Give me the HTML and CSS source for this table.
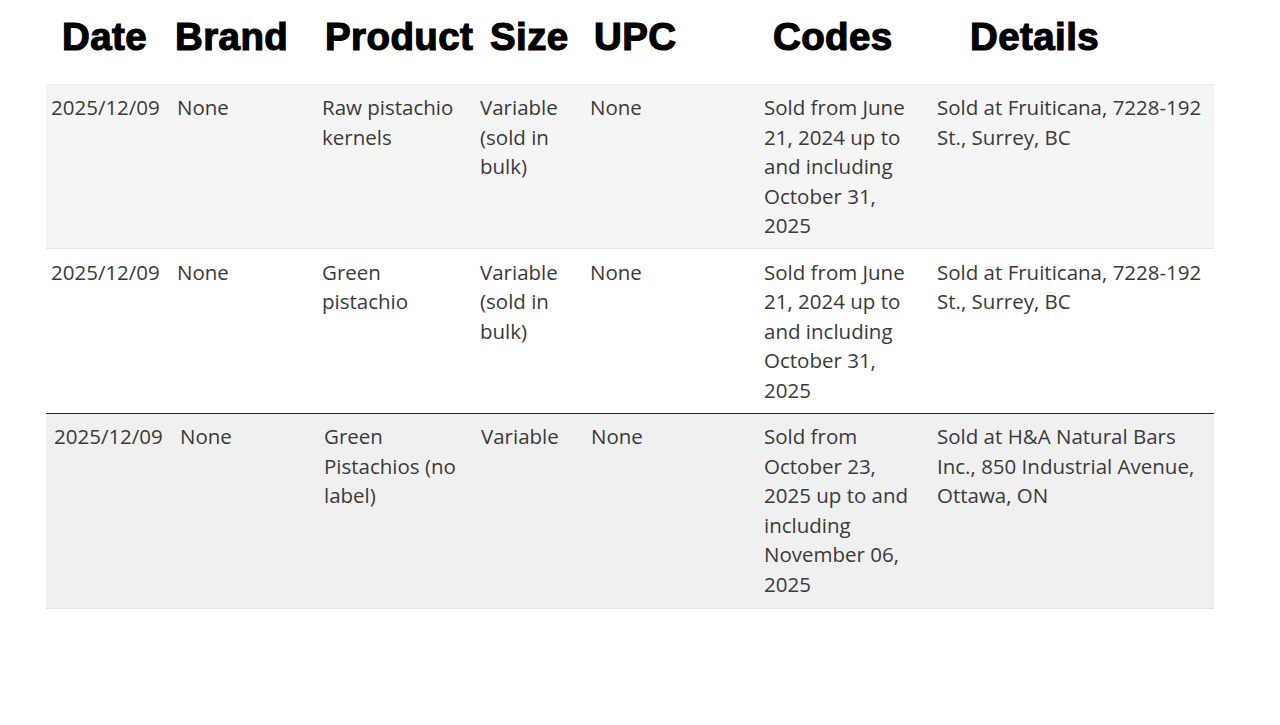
FILE: index.html
```html
<!DOCTYPE html>
<html lang="en">
<head>
<meta charset="utf-8">
<title>Recall table</title>
<link rel="stylesheet" href="styles.css">
</head>
<body>
<div class="head">
  <div class="h h-date">Date</div>
  <div class="h h-brand">Brand</div>
  <div class="h h-product">Product</div>
  <div class="h h-size">Size</div>
  <div class="h h-upc">UPC</div>
  <div class="h h-codes">Codes</div>
  <div class="h h-details">Details</div>
</div>
<table class="tbl">
  <colgroup>
    <col class="c1"><col class="c2"><col class="c3"><col class="c4"><col class="c5"><col class="c6"><col class="c7">
  </colgroup>
  <tbody>
    <tr class="r1">
      <td>2025/12/09</td>
      <td>None</td>
      <td>Raw pistachio<br>kernels</td>
      <td>Variable<br>(sold in<br>bulk)</td>
      <td>None</td>
      <td>Sold from June<br>21, 2024 up to<br>and including<br>October 31,<br>2025</td>
      <td>Sold at Fruiticana, 7228-192<br>St., Surrey, BC</td>
    </tr>
    <tr class="r2">
      <td>2025/12/09</td>
      <td>None</td>
      <td>Green<br>pistachio</td>
      <td>Variable<br>(sold in<br>bulk)</td>
      <td>None</td>
      <td>Sold from June<br>21, 2024 up to<br>and including<br>October 31,<br>2025</td>
      <td>Sold at Fruiticana, 7228-192<br>St., Surrey, BC</td>
    </tr>
    <tr class="r3">
      <td>2025/12/09</td>
      <td>None</td>
      <td>Green<br>Pistachios (no<br>label)</td>
      <td>Variable</td>
      <td>None</td>
      <td>Sold from<br>October 23,<br>2025 up to and<br>including<br>November 06,<br>2025</td>
      <td>Sold at H&amp;A Natural Bars<br>Inc., 850 Industrial Avenue,<br>Ottawa, ON</td>
    </tr>
  </tbody>
</table>
</body>
</html>
```

FILE: styles.css
```css
html, body {
  margin: 0;
  padding: 0;
  background: #ffffff;
}

.head {
  display: grid;
  grid-template-columns: 113px 150px 165px 104px 179px 197px auto;
  padding-left: 62px;
  height: 84px;
  align-items: center;
  box-sizing: border-box;
  padding-bottom: 10px;
}

.h {
  font-family: "Liberation Sans", Arial, sans-serif;
  font-weight: 700;
  font-size: 38.5px;
  line-height: 40px;
  color: #000;
  -webkit-text-stroke: 1.2px #000;
  letter-spacing: 0.4px;
  white-space: nowrap;
}

.tbl {
  margin-left: 46px;
  width: 1168px;
  border-collapse: collapse;
  table-layout: fixed;
  font-family: "Open Sans", "Noto Sans", sans-serif;
  font-size: 20.5px;
  line-height: 29.5px;
  color: #3a3a3a;
}

.c1 { width: 126px; }
.c2 { width: 145px; }
.c3 { width: 158px; }
.c4 { width: 110px; }
.c5 { width: 174px; }
.c6 { width: 173px; }
.c7 { width: 282px; }

.tbl td {
  vertical-align: top;
  padding: 8px 5px 7px 5px;
  white-space: nowrap;
}

.r1 {
  background: #f5f5f5;
  border-top: 1px solid #ebebeb;
  border-bottom: 1px solid #e6e6e6;
}

.r2 {
  background: #ffffff;
}

.r2 td {
  padding-top: 9px;
  padding-bottom: 8px;
}

.r3 {
  background: #f0f0f0;
  border-top: 1px solid #222222;
  border-bottom: 1px solid #e0e0e0;
}

.r3 td {
  padding-bottom: 9px;
}

.r3 td:nth-child(1) { padding-left: 8px; }
.r3 td:nth-child(2) { padding-left: 8px; }
.r3 td:nth-child(3) { padding-left: 7px; }
.r3 td:nth-child(4) { padding-left: 6px; }
.r3 td:nth-child(5) { padding-left: 6px; }
```
